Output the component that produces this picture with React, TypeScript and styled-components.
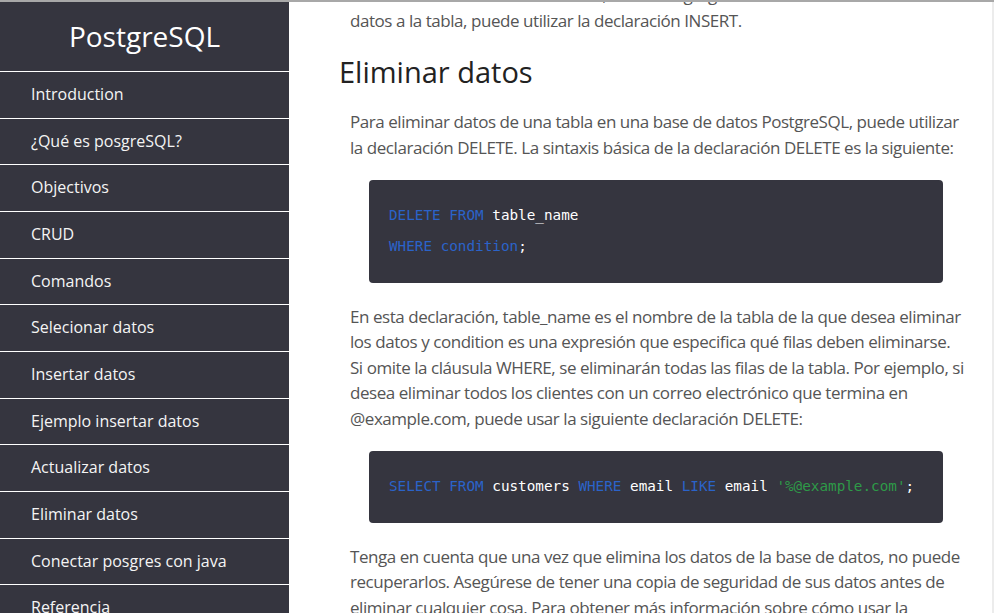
import React from "react";
import styled, { createGlobalStyle } from "styled-components";

const Global = createGlobalStyle`
  html, body { margin: 0; padding: 0; background: #fff; }
  body { font-family: "Open Sans", "Liberation Sans", sans-serif; overflow: hidden; }
  * { box-sizing: border-box; }
`;

const Page = styled.div`
  display: grid;
  grid-template-columns: 289px 1fr;
  height: 613px;
  border-top: 2px solid #a8a8a8;
  overflow: hidden;
`;

const Sidebar = styled.nav`
  background: #35353f;
  display: flex;
  flex-direction: column;
`;

const Brand = styled.div`
  height: 69px;
  display: flex;
  align-items: center;
  justify-content: center;
  color: #fff;
  font-size: 28px;
  padding-bottom: 2px;
`;

const NavItem = styled.a`
  display: block;
  border-top: 1px solid #fff;
  height: 46.67px;
  line-height: 45px;
  padding-left: 31px;
  color: #f4f4f4;
  font-size: 16px;
  text-decoration: none;
`;

const Main = styled.main`
  padding: 0 24px 0 50px;
  border-right: 2px solid #ececec;
`;

const Para = styled.p<{ $first?: boolean }>`
  margin: ${(p) => (p.$first ? "-20px 0 0" : "0")};
  padding-left: 11px;
  font-size: 17px;
  line-height: 25.5px;
  letter-spacing: -0.45px;
  color: #555;
  font-weight: 400;
  font-stretch: 88%;
`;

const Heading = styled.h2`
  margin: 19px 0 17px;
  font-size: 29px;
  line-height: 40px;
  font-weight: 400;
  color: #222;
  font-stretch: 93%;
`;

const CodeBlock = styled.pre`
  margin: 20px 0 21px 30px;
  background: #35353f;
  border-radius: 4px;
  padding: 19.5px 20px 21px;
  font-family: "DejaVu Sans Mono", "Liberation Mono", monospace;
  font-size: 14.3px;
  line-height: 31px;
  color: #fff;
  width: 574px;
`;

const K = styled.span`color: #2b63c9;`;
const S = styled.span`color: #2e9a48;`;

const items = [
  "Introduction",
  "¿Qué es posgreSQL?",
  "Objectivos",
  "CRUD",
  "Comandos",
  "Selecionar datos",
  "Insertar datos",
  "Ejemplo insertar datos",
  "Actualizar datos",
  "Eliminar datos",
  "Conectar posgres con java",
  "Referencia",
];

export default function App() {
  return (
    <>
      <Global />
      <Page>
        <Sidebar>
          <Brand>PostgreSQL</Brand>
          {items.map((t) => (
            <NavItem key={t} href="#">{t}</NavItem>
          ))}
        </Sidebar>
        <Main>
          <Para $first>
            Una vez creada la tabla en la base, si desea agregar nuevos elementos o nuevas
            <br />
            datos a la tabla, puede utilizar la declaración INSERT.
          </Para>
          <Heading>Eliminar datos</Heading>
          <Para>
            Para eliminar datos de una tabla en una base de datos PostgreSQL, puede utilizar
            la declaración DELETE. La sintaxis básica de la declaración DELETE es la siguiente:
          </Para>
          <CodeBlock>
            <K>DELETE FROM</K> table_name{"\n"}
            <K>WHERE condition</K>;
          </CodeBlock>
          <Para>
            En esta declaración, table_name es el nombre de la tabla de la que desea eliminar
            los datos y condition es una expresión que especifica qué filas deben eliminarse.
            <br />
            Si omite la cláusula WHERE, se eliminarán todas las filas de la tabla. Por ejemplo, si
            desea eliminar todos los clientes con un correo electrónico que termina en
            @example.com, puede usar la siguiente declaración DELETE:
          </Para>
          <CodeBlock>
            <K>SELECT FROM</K> customers <K>WHERE</K> email <K>LIKE</K> email <S>'%@example.com'</S>;
          </CodeBlock>
          <Para>
            Tenga en cuenta que una vez que elimina los datos de la base de datos, no puede
            recuperarlos. Asegúrese de tener una copia de seguridad de sus datos antes de
            eliminar cualquier cosa. Para obtener más información sobre cómo usar la
            declaración DELETE, consulte la documentación de PostgreSQL.
          </Para>
        </Main>
      </Page>
    </>
  );
}
